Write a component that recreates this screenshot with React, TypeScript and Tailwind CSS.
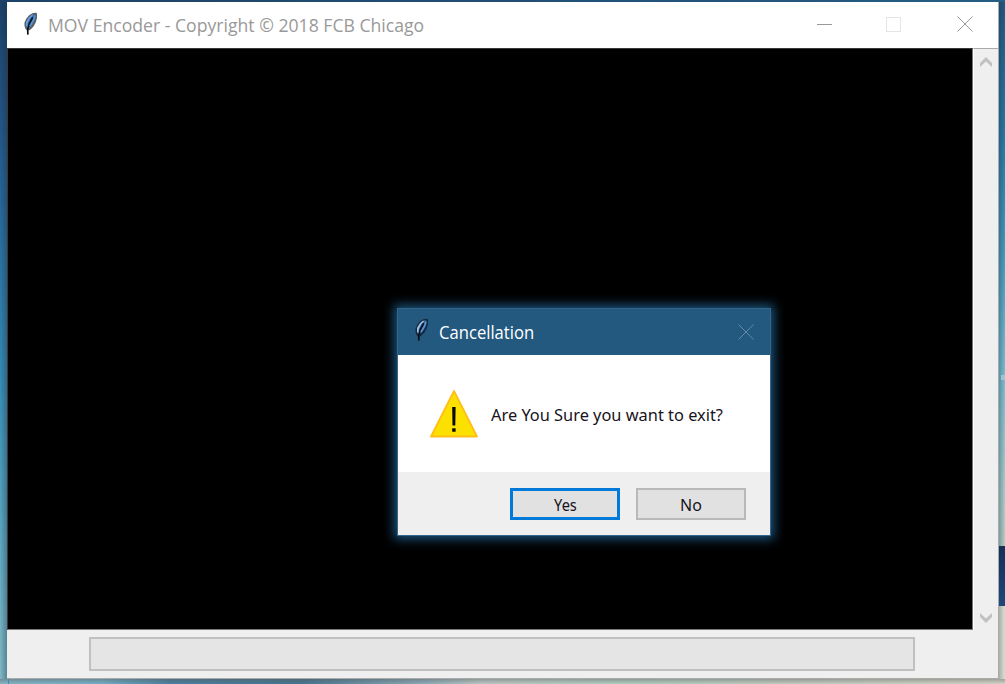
function Feather({ light = false }: { light?: boolean }) {
  return (
    <svg className="block h-6 w-4" viewBox="0 0 16 24">
      <path d="M13.3.8 14 1.5V6L12.7 10.5 10.5 14.5 7 18 5.5 18.5V22.5H4.3V18.5L2.5 17 1.5 14V10.5L3.4 6.6 6.4 3 10 1Z" fill={light ? "#142b41" : "#5b5e62"} />
      <path d="M12.3 2.3V6L10.5 10.5 7.3 14.8 4.3 17 3 13.5V10L5.5 6 8.7 3Z" fill={light ? "#285b96" : "#306dae"} />
      <path d="M10.8 2.5 7 6.5 4.7 11.2V16L3 13.8V10L5.4 6 8.3 3Z" fill={light ? "#a5bfdc" : "#639edd"} />
      <path d="M9.7 5.3 6 12.3 4.6 17.5 4.8 22.5" fill="none" stroke="#030b14" strokeWidth="1.5" />
      <path d="M12 3.5 10.5 8.2 7 14" fill="none" stroke="#5b91d1" strokeWidth="1.7" />
    </svg>
  );
}

function Cross({ color }: { color: string }) {
  return (
    <svg className="block size-4" viewBox="0 0 16 16">
      <path d="M.5.5 15.5 15.5M15.5.5.5 15.5" stroke={color} strokeWidth="1" />
    </svg>
  );
}

function Chevron({ down = false }: { down?: boolean }) {
  return (
    <svg className={down ? "block h-[10px] w-3 rotate-180" : "block h-[10px] w-3"} viewBox="0 0 12 10">
      <path d="M0 6 6 0 12 6V10L6 4.5 0 10Z" fill="#c1c1c1" />
    </svg>
  );
}

function Dialog() {
  return (
    <section className="absolute left-[397px] top-[308px] flex h-[228px] w-[374px] flex-col border border-[#35668c] bg-white shadow-[0_0_10px_3px_#1d547d]">
      <header className="flex h-[46px] shrink-0 items-center bg-[#23587f] pl-[16px] pr-4 text-white">
        <div className="-mt-1"><Feather light /></div>
        <h2 className="-mt-px ml-[9px] origin-left scale-x-[.924] whitespace-nowrap font-['Open_Sans',sans-serif] text-[18px] leading-6">Cancellation</h2>
        <button aria-label="Close" className="ml-auto"><Cross color="#6289a6" /></button>
      </header>
      <div className="flex h-[117px] shrink-0 items-center pl-8">
        <svg className="block h-[49px] w-12" viewBox="0 0 48 49">
          <path d="M24 2 47 47.5H1Z" fill="#fce000" stroke="#ffbe19" strokeWidth="1.8" strokeLinejoin="round" />
          <path d="M22.2 18H25.6L25.3 36.5H22.5ZM22.2 39.2H25.6V42.8H22.2Z" fill="#080800" />
        </svg>
        <p className="ml-[13px] mt-[3px] origin-left scale-x-[1.023] whitespace-nowrap font-['Noto_Sans',sans-serif] text-[16px] leading-6 text-[#171321]">Are You Sure you want to exit?</p>
      </div>
      <footer className="flex flex-1 justify-end gap-4 bg-[#efefef] pr-6 pt-4 font-['Noto_Sans',sans-serif] text-[16px] text-[#171321]">
        <button className="flex h-8 w-[110px] items-center justify-center border-[3px] border-[#0079d8] bg-[#e1e1e1] pt-px"><span className="scale-x-[.91]">Yes</span></button>
        <button className="flex h-8 w-[110px] items-center justify-center border-2 border-[#b9b9b9] bg-[#e1e1e1] pt-px">No</button>
      </footer>
    </section>
  );
}

export default function App() {
  return (
    <main className="relative flex h-[684px] w-[1005px] flex-col overflow-hidden bg-[#8db9c2]">
      <div className="h-0.5 shrink-0 bg-linear-to-r from-[#1e4168] to-[#255d84]" />
      <div className="flex h-[677px] shrink-0">
        <div className="w-[7px] shrink-0 bg-[linear-gradient(90deg,transparent,#17304060),linear-gradient(#1c416b,#215080_14%,#27679a_30%,#358ab5_54%,#58a5c2_76%,#83bac5)]" />
        <section className="flex w-[992px] flex-col border-r border-b border-[#aaa] bg-[#efefef]">
          <header className="flex h-[46px] shrink-0 items-center bg-white pl-[16px] pr-[26px] text-[#999]">
            <div className="-mt-0.5"><Feather /></div>
            <h1 className="-mt-px ml-[9px] origin-left scale-x-[.979] whitespace-nowrap font-['Open_Sans',sans-serif] text-[18px] leading-6">MOV Encoder - Copyright © 2018 FCB Chicago</h1>
            <div className="-mt-0.5 -mr-px ml-auto flex items-center">
              <button aria-label="Minimize" className="mr-[54px] h-px w-[15px] bg-[#999]" />
              <button aria-label="Maximize" disabled className="mr-[56px] size-[15px] border border-[#e5e5e5]" />
              <button aria-label="Close"><Cross color="#999" /></button>
            </div>
          </header>
          <div className="flex h-[582px] shrink-0">
            <div className="w-[966px] border border-[#393939] border-b-[#777] border-r-[#777] bg-black" />
            <div className="flex flex-1 flex-col items-center justify-between border-t border-l border-t-[#aaa] border-l-white pb-[7px] pt-[8px]"><Chevron /><Chevron down /></div>
          </div>
          <div className="flex pl-[82px] pt-[7px]">
            <div className="h-[34px] w-[826px] border-2 border-[#c0c0c0] bg-[#e5e5e5]" />
          </div>
        </section>
        <div className="flex w-1.5 flex-col">
          <div className="h-[544px] bg-[linear-gradient(90deg,#11334a55,transparent),linear-gradient(#24577f,#297aa5_25%,#479bbd_46%,#77bdd0_67%,#a9cdc9_90%,#b5cdc3)] pt-[373px]"><div className="ml-0.5 h-[5px] bg-[#9fc5d0]" /></div>
          <div className="h-[60px] bg-linear-to-b from-[#132f58] to-[#1e477b]" />
          <div className="flex-1 bg-linear-to-r from-[#aab1aa] to-[#dcded2]" />
        </div>
      </div>
      <div className="flex flex-1 bg-[linear-gradient(#55555566,transparent),linear-gradient(90deg,#83b5c4,#74aec4_10%,#4b7f9e_17%,#47758f_30%,#8ba9b7_42%,#bcc7c5_48%,#b0ccbf_62%,#c0cabe_78%,#d2d3c5)]"><div className="ml-2 w-px bg-[#408ab7]" /></div>
      <Dialog />
    </main>
  );
}
